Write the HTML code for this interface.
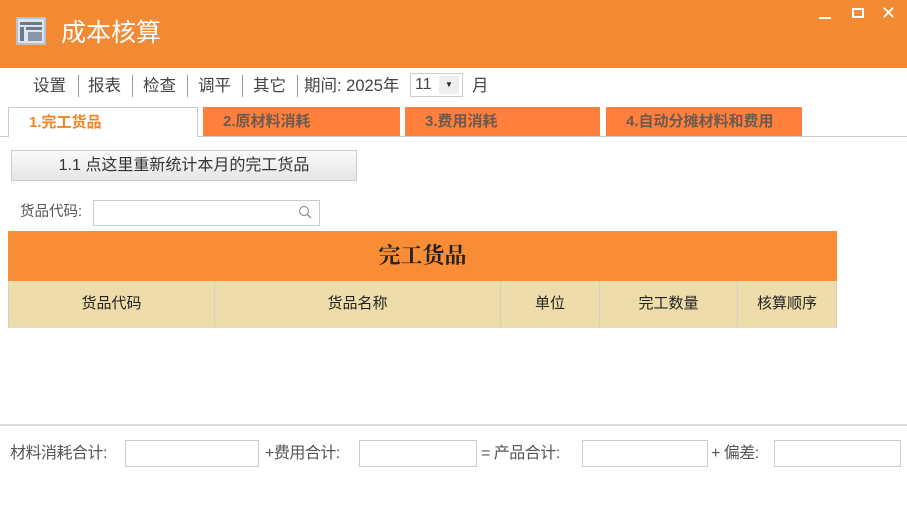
<!DOCTYPE html>
<html><head><meta charset="utf-8"><style>
*{margin:0;padding:0;box-sizing:border-box}
body{width:907px;height:530px;background:#fff;position:relative;overflow:hidden;font-family:"Liberation Sans","Noto Sans CJK SC",sans-serif;color:#444}
.a{position:absolute;white-space:nowrap}
.tb{left:0;top:0;width:907px;height:68px;background:#F28A33}
.sep{position:absolute;top:75px;width:1px;height:22px;background:#999}
.m{position:absolute;top:74px;font-size:16.5px;line-height:24px;color:#444;white-space:nowrap}
.tab{position:absolute;top:107px;height:29px;font-weight:bold;font-size:15px;line-height:29px;color:#6a5a50;background:#FF7F3C}
.inp{position:absolute;border:1px solid #ccc;background:#fff}
.th{position:absolute;top:281px;height:46px;background:#EEDCAA;border-right:1px solid #d5d0c0;font-size:15px;color:#222;text-align:center;line-height:46px}
.bl{position:absolute;top:443px;font-size:16px;line-height:22px;color:#555;white-space:nowrap;letter-spacing:-0.5px}
</style></head><body>
<div class="a tb"></div>
<svg class="a" style="left:16px;top:17px" width="30" height="28" viewBox="0 0 30 28">
<rect x="1" y="1" width="28" height="26" fill="#dfe4ec" stroke="#b8c2d2" stroke-width="2"/>
<rect x="4" y="5" width="22" height="3" fill="#6b7a90"/>
<rect x="4" y="10" width="4" height="14" fill="#6b7a90"/>
<rect x="10" y="10" width="16" height="3" fill="#6b7a90"/>
<rect x="12" y="15" width="14" height="9" fill="#8a96a8"/>
</svg>
<div class="a" style="left:61px;top:16px;font-size:25px;color:#fff;line-height:34px">成本核算</div>
<div class="a" style="left:819px;top:17px;width:12px;height:2px;background:#fff"></div>
<div class="a" style="left:852px;top:8px;width:12px;height:10px;border:2px solid #fff"></div>
<div class="a" style="left:881px;top:4px;font-size:18px;color:#fff;line-height:18px">✕</div>
<div class="m" style="left:33px">设置</div>
<div class="sep" style="left:78px"></div>
<div class="m" style="left:88px">报表</div>
<div class="sep" style="left:132px"></div>
<div class="m" style="left:143px">检查</div>
<div class="sep" style="left:187px"></div>
<div class="m" style="left:198px">调平</div>
<div class="sep" style="left:242px"></div>
<div class="m" style="left:253px">其它</div>
<div class="sep" style="left:297px"></div>
<div class="m" style="left:304px">期间: 2025年</div>
<div class="inp" style="left:410px;top:73px;width:53px;height:24px;font-size:16px;line-height:22px;padding-left:4px">11<span style="position:absolute;left:28px;top:2px;width:20px;height:18px;background:#eee;font-size:8px;text-align:center;line-height:18px;color:#222">▼</span></div>
<div class="m" style="left:472px">月</div>
<div class="a" style="left:0;top:136px;width:907px;height:1px;background:#ccc"></div>
<div class="tab" style="left:8px;width:190px;height:30px;background:#fff;border:1px solid #ccc;border-bottom:none;color:#F5841F;padding-left:20px">1.完工货品</div>
<div class="tab" style="left:203px;width:197px;padding-left:20px">2.原材料消耗</div>
<div class="tab" style="left:405px;width:195px;padding-left:20px">3.费用消耗</div>
<div class="tab" style="left:606px;width:196px;padding-left:20px">4.自动分摊材料和费用</div>
<div class="a" style="left:11px;top:150px;width:346px;height:31px;border:1px solid #ccc;background:linear-gradient(#fafafa,#e6e6e6);font-size:16px;line-height:29px;text-align:center;color:#333">1.1 点这里重新统计本月的完工货品</div>
<div class="a" style="left:20px;top:202px;font-size:14.5px;line-height:20px;color:#555">货品代码:</div>
<div class="inp" style="left:93px;top:200px;width:227px;height:26px"></div>
<svg class="a" style="left:298px;top:205px" width="14" height="14" viewBox="0 0 14 14"><circle cx="6" cy="6" r="4.5" fill="none" stroke="#999" stroke-width="1.3"/><line x1="9.3" y1="9.3" x2="13" y2="13" stroke="#999" stroke-width="1.5"/></svg>
<div class="a" style="left:8px;top:231px;width:829px;height:50px;background:#F88D36;text-align:center;font-family:'Liberation Serif','Noto Serif CJK SC',serif;font-weight:bold;font-size:22px;line-height:50px;color:#222">完工货品</div>
<div class="th" style="left:8px;width:207px;border-left:1px solid #d5d0c0">货品代码</div>
<div class="th" style="left:215px;width:286px">货品名称</div>
<div class="th" style="left:501px;width:99px">单位</div>
<div class="th" style="left:600px;width:138px">完工数量</div>
<div class="th" style="left:738px;width:99px">核算顺序</div>
<div class="a" style="left:8px;top:327px;width:829px;height:1px;background:#ddd"></div>
<div class="a" style="left:0;top:424px;width:907px;height:2px;background:#ddd"></div>
<div class="bl" style="left:10px">材料消耗合计:</div>
<div class="inp" style="left:125px;top:440px;width:134px;height:27px"></div>
<div class="bl" style="left:265px">+费用合计:</div>
<div class="inp" style="left:359px;top:440px;width:118px;height:27px"></div>
<div class="bl" style="left:481px">= 产品合计:</div>
<div class="inp" style="left:582px;top:440px;width:126px;height:27px"></div>
<div class="bl" style="left:711px">+ 偏差:</div>
<div class="inp" style="left:774px;top:440px;width:127px;height:27px"></div>
</body></html>
